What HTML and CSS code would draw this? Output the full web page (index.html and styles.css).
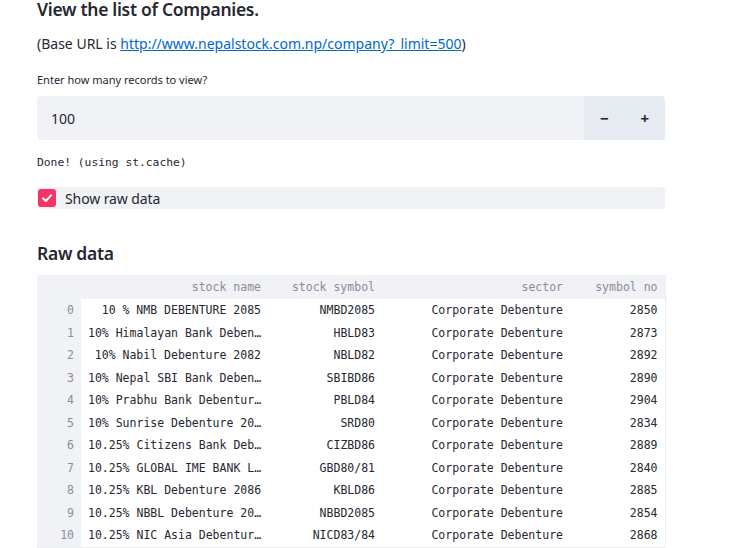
FILE: index.html
```html
<!DOCTYPE html>
<html>
<head>
<meta charset="utf-8">
<link rel="stylesheet" href="styles.css">
</head>
<body>
<main class="main">
  <h2 class="title">View the list of Companies.</h2>
  <p class="para">(Base URL is <a href="#" class="link">http://www.nepalstock.com.np/company?_limit=500</a>)</p>
  <label class="label">Enter how many records to view?</label>
  <div class="numinput">
    <div class="numvalue">100</div>
    <div class="steps">
      <span class="step">&minus;</span>
      <span class="step">+</span>
    </div>
  </div>
  <div class="status">Done! (using st.cache)</div>
  <div class="checkrow">
    <span class="checkbox">
      <svg width="12" height="12" viewBox="0 0 12 12"><path d="M2 6.2 L4.8 9 L10 3.4" fill="none" stroke="#fff" stroke-width="2" stroke-linecap="round" stroke-linejoin="round"/></svg>
    </span>
    <span class="checklabel">Show raw data</span>
  </div>
  <h3 class="subtitle">Raw data</h3>
  <table class="df">
    <colgroup>
      <col class="c-idx"><col class="c-name"><col class="c-sym"><col class="c-sec"><col class="c-no">
    </colgroup>
    <thead>
      <tr><th class="idx"></th><th>stock name</th><th>stock symbol</th><th>sector</th><th>symbol no</th></tr>
    </thead>
    <tbody>
      <tr><td class="idx">0</td><td>10 % NMB DEBENTURE 2085</td><td>NMBD2085</td><td>Corporate Debenture</td><td>2850</td></tr>
      <tr><td class="idx">1</td><td>10% Himalayan Bank Deben…</td><td>HBLD83</td><td>Corporate Debenture</td><td>2873</td></tr>
      <tr><td class="idx">2</td><td>10% Nabil Debenture 2082</td><td>NBLD82</td><td>Corporate Debenture</td><td>2892</td></tr>
      <tr><td class="idx">3</td><td>10% Nepal SBI Bank Deben…</td><td>SBIBD86</td><td>Corporate Debenture</td><td>2890</td></tr>
      <tr><td class="idx">4</td><td>10% Prabhu Bank Debentur…</td><td>PBLD84</td><td>Corporate Debenture</td><td>2904</td></tr>
      <tr><td class="idx">5</td><td>10% Sunrise Debenture 20…</td><td>SRD80</td><td>Corporate Debenture</td><td>2834</td></tr>
      <tr><td class="idx">6</td><td>10.25% Citizens Bank Deb…</td><td>CIZBD86</td><td>Corporate Debenture</td><td>2889</td></tr>
      <tr><td class="idx">7</td><td>10.25% GLOBAL IME BANK L…</td><td>GBD80/81</td><td>Corporate Debenture</td><td>2840</td></tr>
      <tr><td class="idx">8</td><td>10.25% KBL Debenture 2086</td><td>KBLD86</td><td>Corporate Debenture</td><td>2885</td></tr>
      <tr><td class="idx">9</td><td>10.25% NBBL Debenture 20…</td><td>NBBD2085</td><td>Corporate Debenture</td><td>2854</td></tr>
      <tr><td class="idx">10</td><td>10.25% NIC Asia Debentur…</td><td>NICD83/84</td><td>Corporate Debenture</td><td>2868</td></tr>
    </tbody>
  </table>
</main>
</body>
</html>
```
FILE: styles.css
```css
html, body {
  margin: 0;
  padding: 0;
  background: #ffffff;
}
body {
  font-family: "Noto Sans", "Open Sans", sans-serif;
  color: #262730;
  overflow: hidden;
}
.main {
  width: 628px;
  margin-left: 37px;
  display: flex;
  flex-direction: column;
}
.title {
  margin: 0;
  font-size: 17.5px;
  font-weight: 600;
  letter-spacing: -0.3px;
  line-height: 19px;
}
.para {
  margin: 14px 0 0 0;
  font-size: 14px;
  line-height: 22px;
}
.link {
  color: #0068c9;
}
.label {
  margin-top: 17px;
  font-size: 11px;
  line-height: 16px;
}
.numinput {
  margin-top: 8px;
  height: 44px;
  display: flex;
  background: #f0f2f6;
  border-radius: 4px;
  overflow: hidden;
}
.numvalue {
  flex: 1;
  display: flex;
  align-items: center;
  padding-left: 14px;
  font-size: 14px;
}
.steps {
  width: 81px;
  display: flex;
  background: #e6eaf1;
}
.step {
  flex: 1;
  display: flex;
  align-items: center;
  justify-content: center;
  font-weight: 700;
  font-size: 15px;
  color: #262730;
}
.status {
  margin-top: 16px;
  font-family: "DejaVu Sans Mono", monospace;
  font-size: 11.3px;
  line-height: 14px;
}
.checkrow {
  margin-top: 17px;
  height: 22px;
  display: flex;
  align-items: center;
  background: #f0f2f6;
  border-radius: 3px;
}
.checkbox {
  width: 18px;
  height: 18px;
  margin-left: 1px;
  border-radius: 3px;
  background: #f63366;
  display: flex;
  align-items: center;
  justify-content: center;
}
.checklabel {
  margin-left: 9px;
  font-size: 14px;
  letter-spacing: -0.1px;
}
.subtitle {
  margin: 31px 0 0 0;
  font-size: 17.5px;
  font-weight: 600;
  letter-spacing: -0.3px;
  line-height: 26px;
}
.df {
  margin-top: 9px;
  width: 628px;
  table-layout: fixed;
  border-collapse: collapse;
  font-family: "DejaVu Sans Mono", monospace;
  font-size: 11.5px;
  border-right: 1px solid #eceef2;
  border-bottom: 1px solid #eceef2;
}
.c-idx { width: 44px; }
.c-name { width: 187px; }
.c-sym { width: 114px; }
.c-sec { width: 188px; }
.c-no { width: 95px; }
.df th {
  height: 24px;
  padding: 0 7px;
  background: #f0f2f6;
  color: #8c8d96;
  font-weight: 400;
  text-align: right;
  white-space: nowrap;
}
.df td {
  height: 22.5px;
  padding: 0 7px;
  text-align: right;
  white-space: nowrap;
  overflow: hidden;
  color: #262730;
}
.df td.idx {
  background: #f0f2f6;
  color: #8c8d96;
}
```
